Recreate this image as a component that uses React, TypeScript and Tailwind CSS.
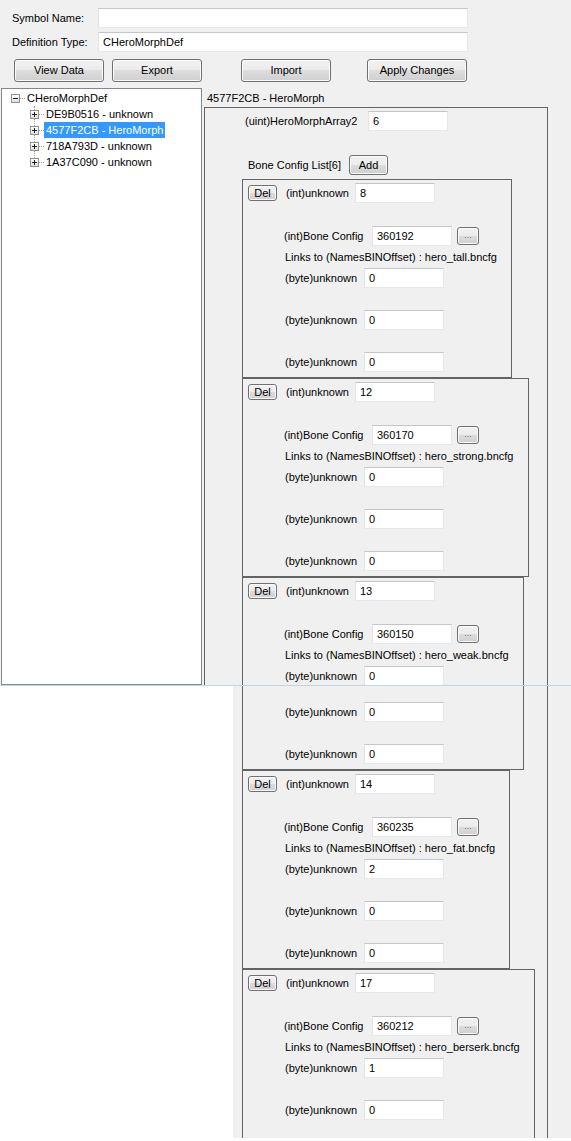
import React from 'react'

type BoneConfig = {
  unknown: string
  config: string
  file: string
  bytes: string[]
  width: number
  tight?: boolean
}

// the last entry runs past the bottom of the scrolled view, so only its first two byte fields are drawn
const boneConfigs: BoneConfig[] = [
  { unknown: '8', config: '360192', file: 'hero_tall.bncfg', bytes: ['0', '0', '0'], width: 270 },
  { unknown: '12', config: '360170', file: 'hero_strong.bncfg', bytes: ['0', '0', '0'], width: 287 },
  { unknown: '13', config: '360150', file: 'hero_weak.bncfg', bytes: ['0', '0', '0'], width: 282, tight: true },
  { unknown: '14', config: '360235', file: 'hero_fat.bncfg', bytes: ['2', '0', '0'], width: 268 },
  { unknown: '17', config: '360212', file: 'hero_berserk.bncfg', bytes: ['1', '0'], width: 293 },
]

const treeChildren = [
  { label: 'DE9B0516 - unknown', selected: false },
  { label: '4577F2CB - HeroMorph', selected: true },
  { label: '718A793D - unknown', selected: false },
  { label: '1A37C090 - unknown', selected: false },
]

function TextBox({ value = '', className = '' }: { value?: string; className?: string }) {
  return (
    <div
      className={`h-[20px] shrink-0 bg-white border border-[#e3e9ef] border-t-[#c2c5ca] border-l-[#e2e3ea] pl-[4px] leading-[18px] whitespace-nowrap ${className}`}
    >
      {value}
    </div>
  )
}

function Button({ label, className = '' }: { label: string; className?: string }) {
  return (
    <div
      className={`flex shrink-0 items-center justify-center rounded-[3px] border border-[#707070] bg-[linear-gradient(#f2f2f2,#ebebeb_50%,#dddddd_50%,#cfcfcf)] shadow-[inset_0_0_0_1px_#fbfbfb] ${className}`}
    >
      {label}
    </div>
  )
}

function Expander({ open }: { open: boolean }) {
  return (
    <div className="relative z-10 w-[9px] h-[9px] shrink-0 border border-[#919191] bg-[linear-gradient(#ffffff,#dedede)]">
      <div className="absolute left-[1px] top-[3px] w-[5px] h-[1px] bg-[#1f1f1f]" />
      {!open && <div className="absolute left-[3px] top-[1px] w-[1px] h-[5px] bg-[#1f1f1f]" />}
    </div>
  )
}

function Tree() {
  return (
    <div className="relative ml-[1px] w-[201px] h-[597px] shrink-0 border border-[#828790] bg-white pt-[1px]">
      {/* sibling connector for the child nodes */}
      <div className="absolute left-[32px] top-[17px] h-[56px] border-l border-dotted border-[#a0a0a0]" />
      <div className="flex items-center h-[16px]">
        <div className="ml-[9px]">
          <Expander open />
        </div>
        <div className="w-[5px] border-t border-dotted border-[#a0a0a0]" />
        <span className="px-[2px] leading-[16px]">CHeroMorphDef</span>
      </div>
      {treeChildren.map((node) => (
        <div key={node.label} className="flex items-center h-[16px]">
          <div className="ml-[28px]">
            <Expander open={false} />
          </div>
          <div className="w-[5px] border-t border-dotted border-[#a0a0a0]" />
          <span
            className={`px-[2px] h-[16px] leading-[16px] whitespace-nowrap ${
              node.selected ? 'bg-[#3399ff] text-white' : ''
            }`}
          >
            {node.label}
          </span>
        </div>
      ))}
    </div>
  )
}

function ByteRow({ value, gap }: { value: string; gap: string }) {
  return (
    <div className={`flex items-center h-[20px] pl-[42px] ${gap}`}>
      <span className="w-[79px] shrink-0">(byte)unknown</span>
      <TextBox value={value} className="w-[80px]" />
    </div>
  )
}

function BoneConfigBox({ item }: { item: BoneConfig }) {
  const gaps = ['mt-[4px]', item.tight ? 'mt-[16px]' : 'mt-[22px]', 'mt-[22px]']
  return (
    <div
      className={`shrink-0 border border-[#646464] ${item.tight ? 'h-[193px]' : 'h-[199px]'}`}
      style={{ width: item.width }}
    >
      <div className="flex items-center h-[20px] mt-[3px]">
        <Button label="Del" className="ml-[5px] w-[29px] h-[16px]" />
        <span className="ml-[9px] w-[69px] shrink-0">(int)unknown</span>
        <TextBox value={item.unknown} className="w-[80px]" />
      </div>
      <div className="flex items-center h-[20px] mt-[23px] pl-[41px]">
        <span className="w-[88px] shrink-0">(int)Bone Config</span>
        <TextBox value={item.config} className="w-[80px]" />
        <Button label="..." className="ml-[5px] w-[22px] h-[18px] text-[9px] text-[#6d6d6d] border-[#9a9a9a]" />
      </div>
      <div className="mt-[4px] h-[14px] leading-[14px] pl-[42px] whitespace-nowrap">
        Links to (NamesBINOffset) : {item.file}
      </div>
      {item.bytes.map((b, i) => (
        <ByteRow key={i} value={b} gap={gaps[i]} />
      ))}
    </div>
  )
}

export default function App() {
  return (
    <div className="relative w-[571px] h-[1141px] overflow-hidden bg-[#f0f0f0] text-[11px] text-black font-['Liberation_Sans',Arial,sans-serif]">
      <div className="flex items-center h-[20px] mt-[8px]">
        <span className="ml-[12px] w-[86px] shrink-0">Symbol Name:</span>
        <TextBox className="w-[370px]" />
      </div>
      <div className="flex items-center h-[20px] mt-[4px]">
        <span className="ml-[12px] w-[86px] shrink-0">Definition Type:</span>
        <TextBox value="CHeroMorphDef" className="w-[370px]" />
      </div>
      <div className="flex h-[23px] mt-[7px]">
        <Button label="View Data" className="ml-[14px] w-[90px] h-[23px]" />
        <Button label="Export" className="ml-[8px] w-[90px] h-[23px]" />
        <Button label="Import" className="ml-[39px] w-[90px] h-[23px]" />
        <Button label="Apply Changes" className="ml-[36px] w-[100px] h-[23px]" />
      </div>

      <div className="flex mt-[6px]">
        <Tree />
        <div className="ml-[2px] w-[344px] shrink-0 flex flex-col">
          <div className="h-[19px] pt-[2px] leading-[17px] pl-[3px]">4577F2CB - HeroMorph</div>
          <div className="h-[1100px] border-l border-t border-r border-[#646464] pt-[3px]">
            <div className="flex items-center h-[20px] pl-[40px]">
              <span className="w-[123px] shrink-0">(uint)HeroMorphArray2</span>
              <TextBox value="6" className="w-[80px]" />
            </div>
            <div className="flex items-center h-[20px] mt-[24px] pl-[43px]">
              <span className="w-[101px] shrink-0">Bone Config List[6]</span>
              <Button label="Add" className="w-[39px] h-[20px]" />
            </div>
            <div className="flex flex-col mt-[4px] ml-[37px]">
              {boneConfigs.map((item) => (
                <BoneConfigBox key={item.config} item={item} />
              ))}
            </div>
          </div>
        </div>
      </div>

      {/* area outside the form window, where only the scrolled panel continues */}
      <div className="absolute left-0 top-[686px] w-[233px] h-[455px] bg-white" />
      <div className="absolute left-0 top-[685px] w-full h-[1px] bg-[#c5d4e3]" />
      <div className="absolute left-0 top-[1138px] w-full h-[3px] bg-white" />
    </div>
  )
}
